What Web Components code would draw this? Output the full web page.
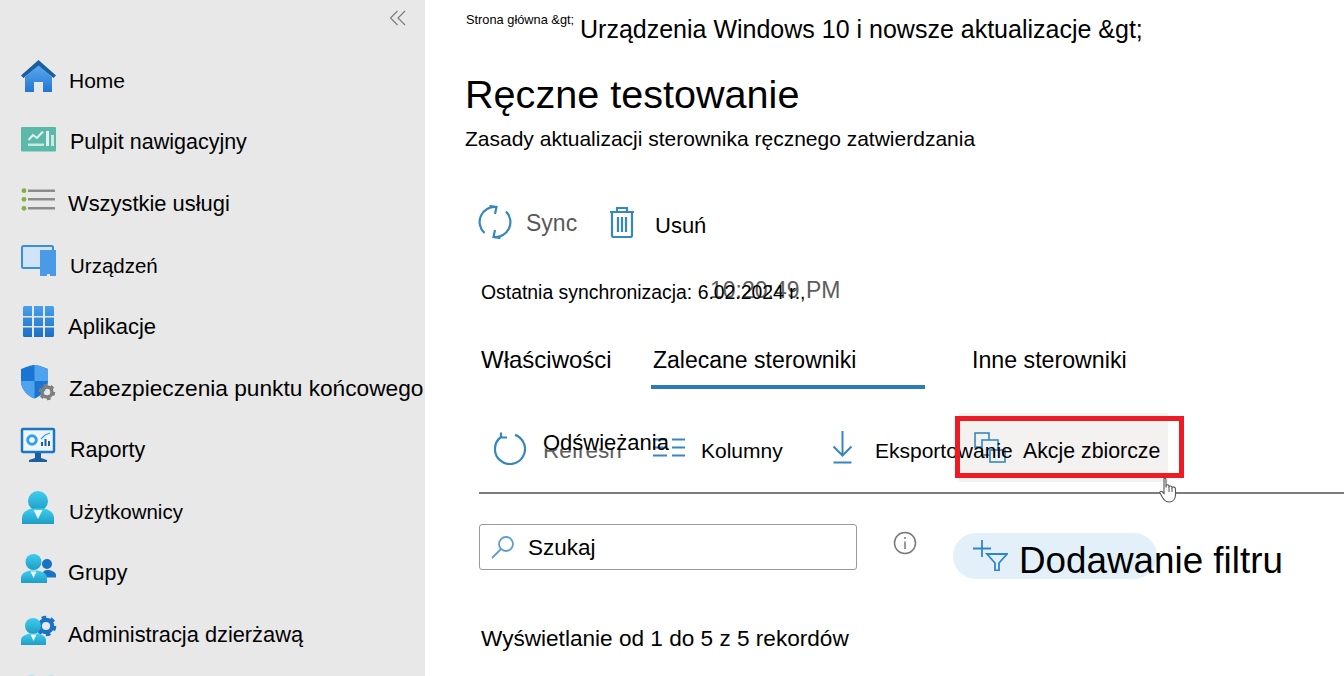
<!DOCTYPE html>
<html lang="pl">
<head>
<meta charset="utf-8">
<title>Ręczne testowanie</title>
<style>
  html, body { margin: 0; height: 676px; overflow: hidden; background: #fff; }
  body { font-family: "Liberation Sans", Arial, sans-serif; color: #000; }
  .status { margin: 32px 0 0 16px; font-size: 19.4px; line-height: 28px; --ghost-size: 23px; --ghost-x: 229px; --ghost-y: -2px; }
</style>
</head>
<body>
<app-shell>
  <side-nav slot="nav">
    <nav-item icon="home" style="--gap:12px;--fs:21px">Home</nav-item>
    <nav-item icon="dash" style="--fs:21.5px">Pulpit nawigacyjny</nav-item>
    <nav-item icon="list" style="--gap:11px;--fs:21.9px">Wszystkie usługi</nav-item>
    <nav-item icon="devices" style="--fs:20.5px">Urządzeń</nav-item>
    <nav-item icon="apps" style="--gap:11px;--fs:22px">Aplikacje</nav-item>
    <nav-item icon="shield" style="--gap:12px;--fs:22.7px">Zabezpieczenia punktu końcowego</nav-item>
    <nav-item icon="reports" style="--fs:21.5px">Raporty</nav-item>
    <nav-item icon="user" style="--gap:12px;--fs:20.5px">Użytkownicy</nav-item>
    <nav-item icon="groups" style="--gap:11px;--fs:21.8px">Grupy</nav-item>
    <nav-item icon="admin" style="--gap:11px;--fs:21.8px">Administracja dzierżawą</nav-item>
    <nav-item icon="more"></nav-item>
  </side-nav>

  <page-head small="Strona główna &amp;gt;" crumb="Urządzenia Windows 10 i nowsze aktualizacje &amp;gt;"
             heading="Ręczne testowanie" sub="Zasady aktualizacji sterownika ręcznego zatwierdzania"></page-head>

  <sync-bar></sync-bar>

  <over-text class="status" ghost="10:20:49 PM">Ostatnia synchronizacja: 6.02.2024 r.,</over-text>

  <tab-strip>
    <tab-item style="--w:170px;--pad:0;--fs:24px">Właściwości</tab-item>
    <tab-item active style="--w:274px;--pad:2px">Zalecane sterowniki</tab-item>
    <tab-item style="--w:200px;--pad:47px;--fs:23.2px">Inne sterowniki</tab-item>
  </tab-strip>

  <grid-tools></grid-tools>
  <filter-row></filter-row>
  <record-count>Wyświetlanie od 1 do 5 z 5 rekordów</record-count>
</app-shell>

<script>
const gear = (cx, cy, r, color) => `
  <circle cx="${cx}" cy="${cy}" r="${r * .62}" fill="none" stroke="${color}" stroke-width="${r * .42}"/>
  <circle cx="${cx}" cy="${cy}" r="${r * .88}" fill="none" stroke="${color}" stroke-width="${r * .3}"
          stroke-dasharray="${r * .46} ${r * .46}"/>`;

const grad = (id, a, b) => `<defs><linearGradient id="${id}" x1="0" y1="0" x2="0" y2="1">
  <stop offset="0" stop-color="${a}"/><stop offset="1" stop-color="${b}"/></linearGradient></defs>`;

// the breadcrumb shows its entities literally
const literal = s => s.replace(/&/g, '&amp;');

// nav icons, drawn in a 36x40 box
const NAV_ICONS = {
  home: `${grad('h', '#5ea8ef', '#1f78d1')}
    <path d="M4 19 17.5 7 31 19V34H22V24H13V34H4Z" fill="url(#h)"/>
    <path d="M0 17.5 17.5 2 35 17.5 32.5 20 17.5 7.5 2.5 20Z" fill="#175f9e"/>`,
  dash: `<rect y="7" width="35" height="24.5" rx="1" fill="#5cb9aa"/>
    <polyline points="7.500 20 12 15 16 18 22 11.500" fill="none" stroke="#e2f3ef" stroke-width="2"/>
    <rect x="7" y="23.500" width="16" height="2.500" fill="#c9e8e1"/>
    <rect x="25" y="11" width="3" height="15" fill="#e2f3ef"/><rect x="30" y="15" width="3" height="11" fill="#c9e8e1"/>`,
  list: `<g fill="#7cb342"><circle cx="3" cy="9.700" r="2.400"/><circle cx="3" cy="18.300" r="2.400"/><circle cx="3" cy="27.300" r="2.400"/></g>
    <g stroke="#8c8c8c" stroke-width="2.500"><path d="M7 9.700H34M7 18.300H34M7 27.300H34"/></g>`,
  devices: `<rect x="1" y="3" width="31" height="22" rx="1.500" fill="#cfe5f7" stroke="#3a8ede" stroke-width="2"/>
    <path d="M19 7H35V33H29V31H26V33H19Z" fill="#4a9ae8"/>`,
  apps: `${grad('a', '#4a9fe9', '#1a70c8')}
    <path fill="url(#a)" d="M2 3.500a1.500 1.500 0 0 1 1.500-1.500H11V12H2ZM13 2H22V12H13ZM24 2H31.500A1.500 1.500 0 0 1 33 3.500V12H24ZM2 13.500H11V22H2ZM13 13.500H22V22H13ZM24 13.500H33V22H24ZM2 23.500H11V33H3.500A1.500 1.500 0 0 1 2 31.500ZM13 23.500H22V33H13ZM24 23.500H33V31.500A1.500 1.500 0 0 1 31.500 33H24Z"/>`,
  shield: `<path d="M13.500-1C17-1 23 1.500 27 3V15C27 24 20 30 13.500 32.500 7 30 0 24 0 15V3C4 1.500 10-1 13.500-1Z" fill="#1a74d2"/>
    <path d="M13.500-1V15H27V3C23 1.500 17-1 13.500-1ZM13.500 15H0C0 24 7 30 13.500 32.500Z" fill="#4ea2ee"/>
    ${gear(26, 26, 8, '#7e7e7e')}`,
  reports: `<rect x="1" y="2" width="32" height="23" rx="1" fill="#eef6fc" stroke="#1c77c3" stroke-width="2.500"/>
    <circle cx="11" cy="13" r="4.300" fill="none" stroke="#36a3dc" stroke-width="3"/>
    <path d="M20 19V15H22V19ZM23.500 19V12H25.500V19ZM27 19V14H29V19Z" fill="#1c5f9b"/>
    <path d="M20 12 24 8 29 6" fill="none" stroke="#36a3dc" stroke-width="1.200"/>
    <path d="M14 26H20V31L26 33V35H8V33L14 31Z" fill="#1b5f9e"/>`,
  user: `${grad('u', '#3fcdf0', '#1f9dc4')}
    <circle cx="17" cy="12" r="10" fill="url(#u)"/>
    <path d="M1 35V29C1 23 7 20 12 19.500H22C27 20 33 23 33 29V35Z" fill="url(#u)"/>
    <path d="M12.500 21H21.500L17 30Z" fill="#e8f8fc"/>`,
  groups: `${grad('g', '#3fcdf0', '#1f9dc4')}
    <circle cx="26" cy="14" r="5" fill="#1a72c4"/>
    <path d="M22 27.500V23C22 21 24 20 26 20 30 20 35 22 35 25V27.500Z" fill="#1a72c4"/>
    <circle cx="12.500" cy="12" r="8" fill="url(#g)"/>
    <path d="M0 33V28C0 23 6 21 9 20.500H16C20 21 26 23 26 28V33Z" fill="url(#g)"/>
    <path d="M9.500 21.500H15.500L12.500 28Z" fill="#e8f8fc"/>`,
  admin: `${grad('d', '#3fcdf0', '#1f9dc4')}
    ${gear(25, 14, 10, '#1a72c4')}
    <circle cx="12" cy="14" r="8" fill="url(#d)"/>
    <path d="M0 33V28C0 24 6 22 9 21.500H16C20 22 25 24 25 28V33Z" fill="url(#d)"/>
    <path d="M9.500 22.500H15.500L12.500 29Z" fill="#e8f8fc"/>`,
  more: `<circle cx="10" cy="6" r="4.500" fill="#b6e6f3"/><circle cx="30" cy="6" r="4" fill="#b6e6f3"/>`
};

class AppShell extends HTMLElement {
  constructor() {
    super();
    this.attachShadow({ mode: 'open' }).innerHTML = `
      <style>
        :host { display: grid; grid-template-columns: 425px 1fr; height: 676px; overflow: hidden; }
        main { padding-left: 40px; min-width: 0; display: flex; flex-direction: column; align-items: flex-start; }
      </style>
      <slot name="nav"></slot>
      <main><slot></slot></main>`;
  }
}

class SideNav extends HTMLElement {
  constructor() {
    super();
    this.attachShadow({ mode: 'open' }).innerHTML = `
      <style>
        :host { display: block; background: #e8e8e8; height: 676px; overflow: hidden; }
        .top { height: 50.5px; display: flex; justify-content: flex-end; padding: 10px 18px 0 0; box-sizing: border-box; }
        svg { width: 18px; height: 16px; }
        .rows { display: grid; grid-auto-rows: 61.5px; }
      </style>
      <div class="top">
        <svg viewBox="0 0 18 16" fill="none" stroke="#7d7d7d" stroke-width="1.200">
          <path d="M8.500 1 1.500 8 8.500 15M16 1 9 8 16 15"/>
        </svg>
      </div>
      <div class="rows"><slot></slot></div>`;
  }
}

class NavItem extends HTMLElement {
  constructor() {
    super();
    this.attachShadow({ mode: 'open' });
  }
  connectedCallback() {
    const icon = NAV_ICONS[this.getAttribute('icon')] || '';
    this.shadowRoot.innerHTML = `
      <style>
        :host { display: flex; align-items: center; padding-left: 21px; font-size: var(--fs, 21px); white-space: nowrap; }
        svg { width: 36px; height: 40px; margin-top: -6px; overflow: visible; flex: none; }
        span { margin-left: var(--gap, 13px); }
      </style>
      <svg viewBox="0 0 36 40">${icon}</svg>
      <span><slot></slot></span>`;
  }
}

class PageHead extends HTMLElement {
  constructor() {
    super();
    this.attachShadow({ mode: 'open' });
  }
  connectedCallback() {
    this.shadowRoot.innerHTML = `
      <style>
        :host { display: block; white-space: nowrap; }
        .crumbs { display: flex; height: 50px; padding-top: 12px; box-sizing: border-box; }
        .small { font-size: 12.800px; line-height: 16px; width: 115px; padding-left: 1px; box-sizing: border-box; }
        .big { font-size: 25px; line-height: 34px; }
        h1 { font-weight: 400; font-size: 39.6px; line-height: 50px; margin: 19px 0 0; }
        p { font-size: 21px; line-height: 26px; margin: 7px 0 0; }
      </style>
      <div class="crumbs">
        <span class="small">${literal(this.getAttribute('small'))}</span>
        <span class="big">${literal(this.getAttribute('crumb'))}</span>
      </div>
      <h1>${this.getAttribute('heading')}</h1>
      <p>${this.getAttribute('sub')}</p>`;
  }
}

class SyncBar extends HTMLElement {
  constructor() {
    super();
    this.attachShadow({ mode: 'open' }).innerHTML = `
      <style>
        :host { display: flex; align-items: center; height: 48px; margin: 46px 0 0 13px; white-space: nowrap; }
        svg { flex: none; fill: none; stroke: #3587c2; stroke-width: 2.200; }
        .sync { color: #595959; font-size: 23px; margin: 3px 0 0 14px; width: 83px; }
        .del { font-size: 22px; margin-left: 20px; margin-top: 8px; }
      </style>
      <svg width="34" height="34" viewBox="0 0 34 34">
        <path d="M6.500 28A15 15 0 0 1 18 2M11.500 1 18.500 2 17 9M28 6.500A15 15 0 0 1 15.500 32M22.500 33 15.500 32 17 25"/>
      </svg>
      <span class="sync">Sync</span>
      <svg width="26" height="32" viewBox="0 0 26 32">
        <path d="M1 6H25M8 6V2H18V6M3 6V29.500A1.500 1.500 0 0 0 4.500 31H21.500A1.500 1.500 0 0 0 23 29.500V6M9 11V26M13 11V26M17 11V26"/>
      </svg>
      <span class="del">Usuń</span>`;
  }
}

// main text with a second grey string showing through it
class OverText extends HTMLElement {
  constructor() {
    super();
    this.attachShadow({ mode: 'open' });
  }
  connectedCallback() {
    this.shadowRoot.innerHTML = `
      <style>
        :host { display: inline-grid; white-space: nowrap; }
        span { grid-area: 1 / 1; }
        .ghost { color: #5e5e5e; font-size: var(--ghost-size, 1em); margin: var(--ghost-y, 0) 0 0 var(--ghost-x, 0);
                 clip-path: inset(var(--ghost-clip, 0) 0 0 0); }
        .text { z-index: 1; }
      </style>
      <span class="ghost">${this.getAttribute('ghost')}</span>
      <span class="text"><slot></slot></span>`;
  }
}

class TabStrip extends HTMLElement {
  constructor() {
    super();
    this.attachShadow({ mode: 'open' }).innerHTML = `
      <style>:host { display: flex; height: 48px; margin: 35px 0 0 16px; }</style>
      <slot></slot>`;
  }
}

class TabItem extends HTMLElement {
  constructor() {
    super();
    this.attachShadow({ mode: 'open' }).innerHTML = `
      <style>
        :host { display: block; width: var(--w); padding-left: var(--pad); box-sizing: border-box;
                font-size: var(--fs, 23px); line-height: 38px; white-space: nowrap; }
        :host([active]) { border-bottom: 4px solid #2a7ab9; height: 48px; }
      </style>
      <slot></slot>`;
  }
}

class ToolBtn extends HTMLElement {
  constructor() {
    super();
    this.attachShadow({ mode: 'open' }).innerHTML = `
      <style>
        :host { display: flex; align-items: center; box-sizing: border-box; white-space: nowrap;
                font-size: var(--fs, 21px); width: var(--w); padding-left: var(--pad, 0); z-index: var(--z, 0); }
        :host([hover]) { background: #f3f2f1; }
        .label { margin-left: var(--gap, 16px); margin-top: var(--drop, 7px); }
        ::slotted(svg) { flex: none; fill: none; stroke: #3587c2; stroke-width: 2; }
      </style>
      <slot name="icon"></slot>
      <span class="label"><slot></slot></span>`;
  }
}

class GridTools extends HTMLElement {
  constructor() {
    super();
    this.attachShadow({ mode: 'open' }).innerHTML = `
      <style>
        :host { display: block; margin: 24px 0 0 14px; width: 865px; }
        .row { display: flex; height: 69px; position: relative; }
        .refresh { --ghost-size: 22.500px; --ghost-x: 0; --ghost-y: 8px; --ghost-clip: 11px; font-size: 22px; }
        hr { border: 0; height: 2px; background: #7d7d7d; margin: 10px 0 0; }
        .mark { position: absolute; left: 476px; top: 3px; width: 229px; height: 62px; box-sizing: border-box;
                border: 5px solid #ed1c24; z-index: 3; }
        .hand { position: absolute; left: 680px; top: 64px; z-index: 4; }
      </style>
      <div class="row">
        <tool-btn style="--w:174px;--pad:15px;--gap:17px;--drop:-2px;--z:2">
          <svg slot="icon" width="32" height="34" viewBox="0 0 32 34">
            <path d="M21 3.900A15 15 0 1 1 7 6M7 1.500 7 6.500 13 6.500" style="stroke:#3587c2;stroke-width:2.200;fill:none"/>
          </svg>
          <over-text class="refresh" ghost="Refresh">Odświeżania</over-text>
        </tool-btn>
        <tool-btn style="--w:179px;--z:1">
          <svg slot="icon" width="32" height="20" viewBox="0 0 32 20">
            <path d="M0 1.500H14M0 9.500H14M0 17.500H14M19 1.500H32M19 9.500H32M19 17.500H32"/>
          </svg>
          Kolumny
        </tool-btn>
        <tool-btn style="--w:127px;--gap:22px;--z:2">
          <svg slot="icon" width="21" height="34" viewBox="0 0 21 34">
            <path d="M10.500 0V24M1.500 15.500 10.500 24.500 19.500 15.500M1.500 31.500H19.500"/>
          </svg>
          Eksportowanie
        </tool-btn>
        <tool-btn hover style="--w:209px;--pad:15px;--gap:17px;--z:1;--fs:21.300px">
          <svg slot="icon" width="32" height="32" viewBox="0 0 32 32">
            <g style="stroke:#3f86b8;stroke-width:1.600;fill:#eef3f6">
              <rect x="1" y="1" width="14" height="14"/><rect x="8" y="8" width="16" height="15"/><rect x="16" y="18" width="15" height="12"/>
            </g>
          </svg>
          Akcje zbiorcze
        </tool-btn>
        <div class="mark"></div>
        <svg class="hand" width="20" height="26" viewBox="0 0 20 26">
          <path d="M5 1.500C6 1 7 1.500 7 3V10.500L7.500 8C9 7.500 10 8 10 9.500 11 8.500 13 9 13 10.500 14 9.500 16.500 10 16.500 12V18C16.500 22 14 25 10 25 6.500 25 5 23 3.500 20.500L1 16C.5 14.500 2 13.500 3.500 15L5 16.500Z"
                fill="#fff" stroke="#555" stroke-width="1.100"/>
          <path d="M10 10V15M13 11V15" stroke="#555" stroke-width="1"/>
        </svg>
      </div>
      <hr>`;
  }
}

class FilterRow extends HTMLElement {
  constructor() {
    super();
    this.attachShadow({ mode: 'open' }).innerHTML = `
      <style>
        :host { display: flex; align-items: flex-start; margin: 30px 0 0 14px; white-space: nowrap; }
        .search { display: flex; align-items: center; width: 378px; height: 46px; box-sizing: border-box;
                  border: 1.500px solid #9a9a9a; border-radius: 3px; padding: 2px 0 0 11px; font-size: 22.500px; }
        .search svg { margin: -2px 13px 0 0; }
        .info { margin: 7px 0 0 36px; flex: none; }
        .pill { display: flex; width: 204px; height: 46px; margin: 9px 0 0 36px; padding-left: 19px; box-sizing: border-box;
                border-radius: 23px; background: #e3f0fa; font-size: 36.800px; line-height: 55px; }
        .pill svg { flex: none; margin: 6px 11px 0 0; }
      </style>
      <div class="search">
        <svg width="24" height="24" viewBox="0 0 24 24" fill="none" stroke="#5b9fd1" stroke-width="1.800">
          <circle cx="15" cy="9" r="7"/><path d="M10 14 1 23"/>
        </svg>
        Szukaj
      </div>
      <svg class="info" width="24" height="24" viewBox="0 0 24 24" fill="none" stroke="#777" stroke-width="1.500">
        <circle cx="12" cy="12" r="10.500"/><path d="M12 10.500V18M12 6V8"/>
      </svg>
      <div class="pill">
        <svg width="36" height="32" viewBox="0 0 36 32" fill="none" stroke="#2f86c6" stroke-width="1.800">
          <path d="M1 9.500H19M10 1V18M15 15H35L27 24V31.500H23V24Z"/>
        </svg>
        Dodawanie filtru
      </div>`;
  }
}

class RecordCount extends HTMLElement {
  constructor() {
    super();
    this.attachShadow({ mode: 'open' }).innerHTML = `
      <style>:host { display: block; margin: 47px 0 0 16px; font-size: 22.600px; line-height: 26px; white-space: nowrap; }</style>
      <slot></slot>`;
  }
}

customElements.define('app-shell', AppShell);
customElements.define('side-nav', SideNav);
customElements.define('nav-item', NavItem);
customElements.define('page-head', PageHead);
customElements.define('sync-bar', SyncBar);
customElements.define('over-text', OverText);
customElements.define('tab-strip', TabStrip);
customElements.define('tab-item', TabItem);
customElements.define('tool-btn', ToolBtn);
customElements.define('grid-tools', GridTools);
customElements.define('filter-row', FilterRow);
customElements.define('record-count', RecordCount);
</script>
</body>
</html>
